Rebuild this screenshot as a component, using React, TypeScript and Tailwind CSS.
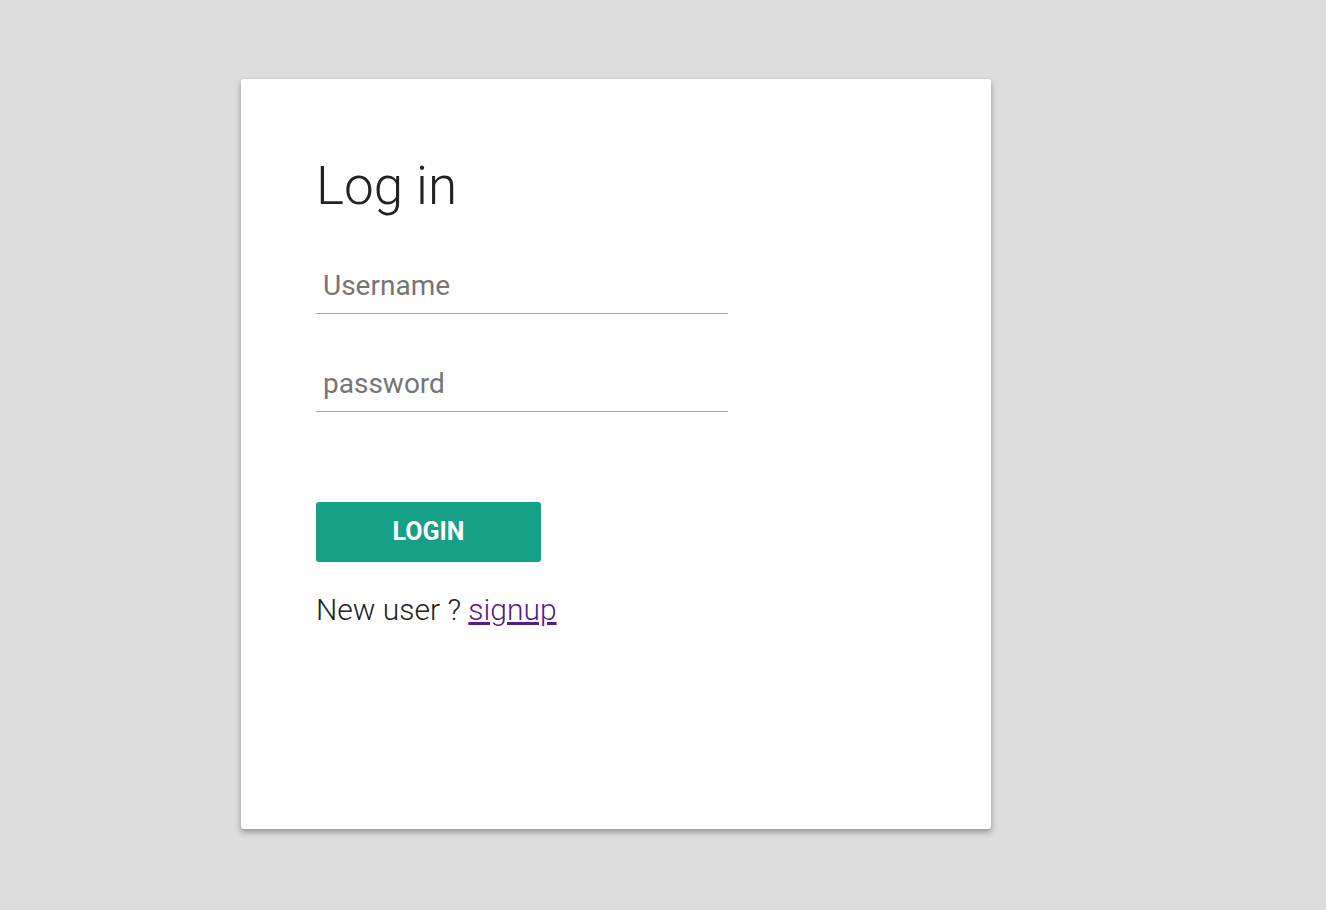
export default function App() {
  return (
    <div className="min-h-[910px] bg-[#dddddd] pt-[79px] pl-[241px]" style={{ fontFamily: 'Roboto, "Liberation Sans", sans-serif' }}>
      <div className="w-[750px] h-[750px] bg-white rounded-[3px] shadow-[0_3px_6px_rgba(0,0,0,0.35)] px-[75px] pt-[81px]">
        <h1 className="text-[53px] leading-[53px] font-light text-[#222222]">Log in</h1>
        <form className="flex flex-col w-[412px] mt-[44px]">
          <input
            type="text"
            placeholder="Username"
            className="h-[57px] border-b border-[#aaaaaa] px-[7px] text-[28px] text-[#333] placeholder:text-[#757575] outline-none"
          />
          <input
            type="password"
            placeholder="password"
            className="h-[57px] mt-[41px] border-b border-[#aaaaaa] px-[7px] text-[28px] text-[#333] placeholder:text-[#757575] outline-none"
          />
        </form>
        <button className="mt-[90px] w-[225px] h-[60px] rounded-[3px] bg-[#16a085] text-white text-[25px] font-bold uppercase">
          Login
        </button>
        <p className="mt-[25px] text-[30px] font-light text-[#222222]">
          New user ? <a href="#" className="underline text-[#551a8b]">signup</a>
        </p>
      </div>
    </div>
  );
}
